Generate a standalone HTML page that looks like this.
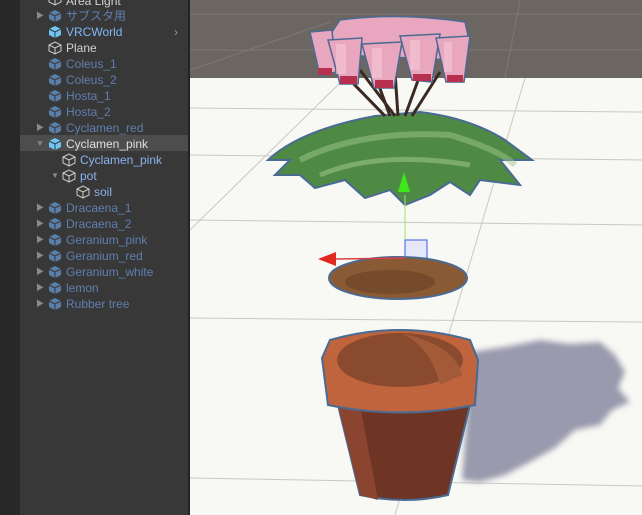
<!DOCTYPE html>
<html><head><meta charset="utf-8"><style>
html,body{margin:0;padding:0;width:642px;height:515px;overflow:hidden;background:#f8f8f4}
#strip{position:absolute;left:0;top:0;width:20px;height:515px;background:#282828}
#panel{position:absolute;left:20px;top:0;width:168px;height:515px;background:#383838}
#border{position:absolute;left:188px;top:0;width:2px;height:515px;background:#232323}
.row{position:absolute;left:0;width:168px;height:16px;font:12px "Liberation Sans","Noto Sans CJK JP",sans-serif;line-height:16px;white-space:nowrap}
.row .t{position:absolute;top:0}
.row .ar{position:absolute;top:0;font-size:8px;color:#8a8a8a}
.pf{color:#5f7fb0}
.sel{background:#4d4d4d}
</style></head><body>
<svg width="642" height="515" style="position:absolute;left:0;top:0">
<defs><filter id="bl"><feGaussianBlur stdDeviation="3"/></filter></defs>
<rect x="190" y="0" width="452" height="78" fill="#6b6661"/>
<rect x="190" y="78" width="452" height="437" fill="#f8f8f4"/>
<g stroke="#7d7873" stroke-width="1" fill="none">
<line x1="190" y1="14" x2="642" y2="14"/><line x1="190" y1="50" x2="642" y2="50"/>
<line x1="190" y1="70" x2="330" y2="22"/><line x1="520" y1="0" x2="505" y2="78"/>
</g>
<g stroke="#c8c8c4" stroke-width="1" fill="none">
<line x1="190" y1="108" x2="642" y2="112"/><line x1="190" y1="155" x2="642" y2="160"/>
<line x1="190" y1="220" x2="642" y2="225"/><line x1="190" y1="318" x2="642" y2="322"/>
<line x1="190" y1="478" x2="642" y2="486"/>
<line x1="190" y1="230" x2="345" y2="78"/><line x1="525" y1="78" x2="395" y2="515"/>
</g>
<path d="M472 352 L510 346 L540 340 L570 344 L600 342 L615 355 L625 372 L618 388 L630 402 L612 410 L600 425 L575 430 L555 448 L530 462 L505 475 L480 482 L462 480 Z" fill="#9a9aae" filter="url(#bl)"/>
<!-- leaves -->
<path d="M375 116 L420 112 Q470 118 505 140 L532 160 L500 160 L520 185 L480 180 L470 195 L450 182 L430 195 L405 205 L390 190 L365 198 L345 180 L315 188 L300 175 L275 175 L290 160 L268 160 Q300 130 375 116 Z" fill="#4f8a45" stroke="#4a6a92" stroke-width="2"/>
<path d="M300 160 Q360 130 450 135 Q500 150 515 165" fill="none" stroke="#9fc68d" stroke-width="6" opacity=".5"/>
<path d="M320 175 Q380 150 470 165" fill="none" stroke="#a7cc95" stroke-width="5" opacity=".5"/>
<!-- stems -->
<g stroke="#3a2a22" stroke-width="3">
<line x1="385" y1="116" x2="345" y2="75"/><line x1="390" y1="116" x2="375" y2="75"/><line x1="398" y1="116" x2="395" y2="72"/>
<line x1="405" y1="116" x2="420" y2="75"/><line x1="412" y1="116" x2="440" y2="72"/><line x1="395" y1="116" x2="360" y2="70"/>
</g>
<!-- flowers -->
<g stroke="#4a6a92" stroke-width="1.5" fill="#e8a6bf">
<path d="M340 20 Q400 12 465 22 L470 45 L455 60 L340 55 L330 35 Z"/>
<path d="M310 32 L332 30 L336 72 L320 76 Z"/>
<path d="M328 40 L362 38 L358 84 L340 84 Z"/>
<path d="M362 44 L402 42 L394 88 L374 88 Z"/>
<path d="M400 36 L440 34 L432 82 L412 80 Z"/>
<path d="M436 38 L470 36 L464 82 L446 82 Z"/>
</g>
<g fill="#f2c4d4" opacity=".7"><rect x="336" y="44" width="10" height="30"/><rect x="372" y="48" width="10" height="30"/><rect x="410" y="40" width="10" height="30"/><rect x="444" y="42" width="8" height="30"/></g>
<g fill="#b8304f"><rect x="318" y="68" width="14" height="7"/><rect x="340" y="76" width="17" height="8"/><rect x="375" y="80" width="18" height="8"/><rect x="413" y="74" width="18" height="7"/><rect x="447" y="75" width="16" height="7"/></g>
<!-- gizmo -->
<line x1="405" y1="195" x2="405" y2="258" stroke="#9ce27a" stroke-width="1"/>
<polygon points="404,172 398,192 410,192" fill="#3ee81a"/>
<rect x="405" y="240" width="22" height="18" fill="#e6e8fa" stroke="#3a5ce0" stroke-width="1"/>
<!-- soil -->
<ellipse cx="398" cy="278" rx="69" ry="21" fill="#8a5a35" stroke="#4a6a92" stroke-width="2"/>
<ellipse cx="390" cy="282" rx="45" ry="12" fill="#5a3a22" opacity=".45"/>
<line x1="336" y1="259" x2="405" y2="258" stroke="#d94040" stroke-width="1.5"/>
<polygon points="318,259 336,252 336,266" fill="#e02a20"/>
<!-- pot -->
<path d="M338 405 L470 405 L448 495 Q405 505 360 495 Z" fill="#6e3424" stroke="#4a6a92" stroke-width="2"/>
<path d="M338 405 L360 405 L378 500 L360 495 Z" fill="#8a4430"/>
<path d="M330 340 Q400 320 470 340 L478 360 L475 405 Q400 420 328 405 L322 358 Z" fill="#c0643e" stroke="#4a6a92" stroke-width="2"/>
<ellipse cx="400" cy="360" rx="63" ry="27" fill="#8a4a2e"/>
<path d="M400 333 Q430 345 440 385 L462 375 Q455 345 400 333Z" fill="#a25a38"/>
</svg>
<div id="strip"></div>
<div id="panel">
<div class="row" style="top:-7px"><span class="t" style="left:46px;color:#d2d2d2">Area Light</span></div>
<div class="row" style="top:8px"><span class="ar" style="left:16px">▶</span><span class="t pf" style="left:46px">サブスタ用</span></div>
<div class="row" style="top:24px"><span class="t" style="left:46px;color:#7fb8f5">VRCWorld</span><span class="t" style="left:154px;color:#999">›</span></div>
<div class="row" style="top:40px"><span class="t" style="left:46px;color:#d2d2d2">Plane</span></div>
<div class="row" style="top:56px"><span class="t pf" style="left:46px">Coleus_1</span></div>
<div class="row" style="top:72px"><span class="t pf" style="left:46px">Coleus_2</span></div>
<div class="row" style="top:88px"><span class="t pf" style="left:46px">Hosta_1</span></div>
<div class="row" style="top:104px"><span class="t pf" style="left:46px">Hosta_2</span></div>
<div class="row" style="top:120px"><span class="ar" style="left:16px">▶</span><span class="t pf" style="left:46px">Cyclamen_red</span></div>
<div class="row sel" style="top:135px"><span class="ar" style="left:16px;top:1px">▼</span><span class="t" style="left:46px;top:1px;color:#e0e0e0">Cyclamen_pink</span></div>
<div class="row" style="top:152px"><span class="t" style="left:60px;color:#8ab4f0">Cyclamen_pink</span></div>
<div class="row" style="top:168px"><span class="ar" style="left:31px">▼</span><span class="t" style="left:60px;color:#8ab4f0">pot</span></div>
<div class="row" style="top:184px"><span class="t" style="left:74px;color:#8ab4f0">soil</span></div>
<div class="row" style="top:200px"><span class="ar" style="left:16px">▶</span><span class="t pf" style="left:46px">Dracaena_1</span></div>
<div class="row" style="top:216px"><span class="ar" style="left:16px">▶</span><span class="t pf" style="left:46px">Dracaena_2</span></div>
<div class="row" style="top:232px"><span class="ar" style="left:16px">▶</span><span class="t pf" style="left:46px">Geranium_pink</span></div>
<div class="row" style="top:248px"><span class="ar" style="left:16px">▶</span><span class="t pf" style="left:46px">Geranium_red</span></div>
<div class="row" style="top:264px"><span class="ar" style="left:16px">▶</span><span class="t pf" style="left:46px">Geranium_white</span></div>
<div class="row" style="top:280px"><span class="ar" style="left:16px">▶</span><span class="t pf" style="left:46px">lemon</span></div>
<div class="row" style="top:296px"><span class="ar" style="left:16px">▶</span><span class="t pf" style="left:46px">Rubber tree</span></div>
</div>
<div id="border"></div>
<svg width="190" height="320" style="position:absolute;left:0;top:0">
<defs>
<g id="cb"><path d="M0 3 L6 0 L12 3 L12 9 L6 12 L0 9 Z M0 3 L6 6 L12 3 M6 6 L6 12" fill="none" stroke="#d0d0d0" stroke-width="1"/></g>
<g id="cf"><path d="M0 3 L6 0 L12 3 L12 9 L6 12 L0 9 Z" fill="#5a7ea8"/><path d="M0 3 L6 6 L12 3 M6 6 L6 12" stroke="#383838" stroke-width="1" fill="none"/></g>
<g id="cv"><path d="M0 3 L6 0 L12 3 L12 9 L6 12 L0 9 Z" fill="#6fc6f0"/><path d="M0 3 L6 6 L12 3 M6 6 L6 12" stroke="#383838" stroke-width="1" fill="none"/></g>
</defs>
<use href="#cb" x="49" y="-7"/>
<use href="#cf" x="49" y="10"/>
<use href="#cv" x="49" y="26"/>
<use href="#cb" x="49" y="42"/>
<use href="#cf" x="49" y="58"/><use href="#cf" x="49" y="74"/><use href="#cf" x="49" y="90"/><use href="#cf" x="49" y="106"/><use href="#cf" x="49" y="122"/>
<use href="#cv" x="49" y="138"/>
<use href="#cb" x="63" y="154"/><use href="#cb" x="63" y="170"/><use href="#cb" x="77" y="186"/>
<use href="#cf" x="49" y="202"/><use href="#cf" x="49" y="218"/><use href="#cf" x="49" y="234"/><use href="#cf" x="49" y="250"/><use href="#cf" x="49" y="266"/><use href="#cf" x="49" y="282"/><use href="#cf" x="49" y="298"/>
</svg>
</body></html>
